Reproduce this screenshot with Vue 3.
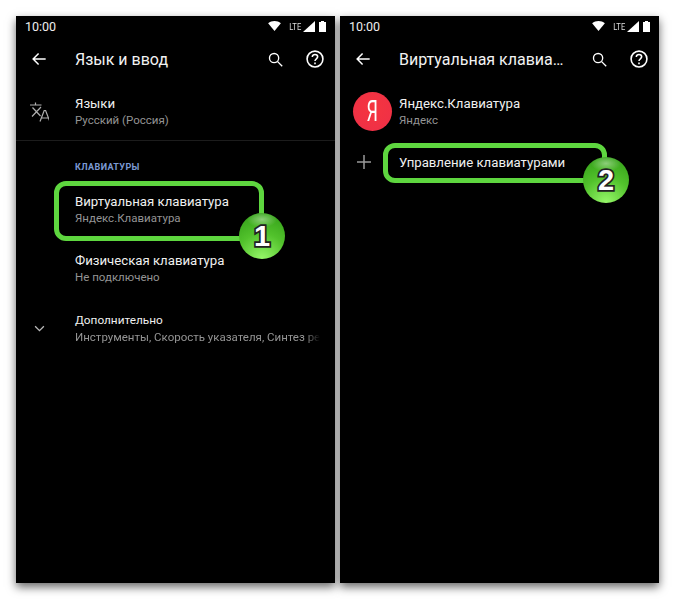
<template>
  <div class="page">
    <!-- левый экран -->
    <section class="phone">
      <div class="status">
        <span class="time">10:00</span>
        <span class="status-icons">
          <svg class="wifi" viewBox="0 0 14 11"><path d="M0 2.600C2 .9 4.400 0 7 0s5 .9 7 2.600L7 11z" /></svg>
          <span class="lte">LTE</span>
          <svg class="signal" viewBox="0 0 12 11"><path d="M12 0v11H0z" /></svg>
          <svg class="battery" viewBox="0 0 7 11"><path d="M2 0h3v1h2v10H0V1h2z" /></svg>
        </span>
      </div>
      <header class="toolbar">
        <svg class="back" viewBox="0 0 24 24"><path d="M20 12H5M11.500 5.500 5 12l6.500 6.500" /></svg>
        <h1 class="title">Язык и ввод</h1>
        <svg class="tool-icon search" viewBox="0 0 24 24"><circle cx="10" cy="10" r="6.500" /><path d="m15 15 6.500 6.500" /></svg>
        <svg class="tool-icon help" viewBox="0 0 24 24">
          <circle cx="12" cy="12" r="9.500" />
          <path d="M8.800 9.600c0-1.900 1.400-3.100 3.200-3.100s3.200 1.200 3.200 2.900c0 2.300-3.200 2.500-3.200 5.100" />
          <path d="M12 16.200v2" />
        </svg>
      </header>
      <div class="row row-lang">
        <span class="row-icon">
          <svg class="translate" viewBox="0 0 20 22">
            <path d="M1 5h11.500M6.500 2.500V5M3 16.500l9-9.500M3.500 7.500l8 8.500" />
            <path d="m11 21.500 4.200-11h1.400l4.200 11M12.500 18h6.800" />
          </svg>
        </span>
        <div class="row-text">
          <div class="row-title">Языки</div>
          <div class="row-sub">Русский (Россия)</div>
        </div>
      </div>
      <div class="divider"></div>
      <div class="group-label">КЛАВИАТУРЫ</div>
      <div class="row row-key">
        <span class="row-icon"></span>
        <div class="row-text">
          <div class="row-title">Виртуальная клавиатура</div>
          <div class="row-sub">Яндекс.Клавиатура</div>
        </div>
        <div class="mark mark-one"></div>
        <div class="badge badge-one">1</div>
      </div>
      <div class="row row-key">
        <span class="row-icon"></span>
        <div class="row-text">
          <div class="row-title">Физическая клавиатура</div>
          <div class="row-sub">Не подключено</div>
        </div>
      </div>
      <div class="row row-key">
        <span class="row-icon">
          <svg class="chevron" viewBox="0 0 12 8"><path d="m1 1.500 5 5 5-5" /></svg>
        </span>
        <div class="row-text">
          <div class="row-title small">Дополнительно</div>
          <div class="row-sub fade">Инструменты, Скорость указателя, Синтез ре</div>
        </div>
      </div>
    </section>

    <!-- правый экран -->
    <section class="phone">
      <div class="status">
        <span class="time">10:00</span>
        <span class="status-icons">
          <svg class="wifi" viewBox="0 0 14 11"><path d="M0 2.600C2 .9 4.400 0 7 0s5 .9 7 2.600L7 11z" /></svg>
          <span class="lte">LTE</span>
          <svg class="signal" viewBox="0 0 12 11"><path d="M12 0v11H0z" /></svg>
          <svg class="battery" viewBox="0 0 7 11"><path d="M2 0h3v1h2v10H0V1h2z" /></svg>
        </span>
      </div>
      <header class="toolbar">
        <svg class="back" viewBox="0 0 24 24"><path d="M20 12H5M11.500 5.500 5 12l6.500 6.500" /></svg>
        <h1 class="title">Виртуальная клавиа…</h1>
        <svg class="tool-icon search" viewBox="0 0 24 24"><circle cx="10" cy="10" r="6.500" /><path d="m15 15 6.500 6.500" /></svg>
        <svg class="tool-icon help" viewBox="0 0 24 24">
          <circle cx="12" cy="12" r="9.500" />
          <path d="M8.800 9.600c0-1.900 1.400-3.100 3.200-3.100s3.200 1.200 3.200 2.900c0 2.300-3.200 2.500-3.200 5.100" />
          <path d="M12 16.200v2" />
        </svg>
      </header>
      <div class="row row-lang">
        <span class="row-icon row-avatar">
          <span class="yandex"><span class="yandex-letter">Я</span></span>
        </span>
        <div class="row-text">
          <div class="row-title">Яндекс.Клавиатура</div>
          <div class="row-sub">Яндекс</div>
        </div>
      </div>
      <div class="row row-manage">
        <span class="row-icon">
          <svg class="plus" viewBox="0 0 14 14"><path d="M7 0v14M0 7h14" /></svg>
        </span>
        <div class="row-text">
          <div class="row-title">Управление клавиатурами</div>
        </div>
        <div class="mark mark-two"></div>
        <div class="badge badge-two">2</div>
      </div>
    </section>
  </div>
</template>

<script setup>
// статичный скриншот, данных нет
</script>

<style>
html,
body {
  margin: 0;
  background: #fff;
}
</style>

<style scoped>
.page {
  display: flex;
  gap: 5px;
  width: 675px;
  height: 599px;
  padding: 16px;
  box-sizing: border-box;
  font-family: Roboto, "Noto Sans", sans-serif;
  overflow: hidden;
}

.phone {
  width: 319px;
  height: 567px;
  background: #000;
  color: #fff;
  box-shadow: 0 4px 9px rgba(0, 0, 0, 0.6);
}

.status {
  display: flex;
  align-items: center;
  justify-content: space-between;
  height: 20px;
  padding: 0 9px;
}

.time {
  font-size: 12.500px;
  color: #eee;
}

.status-icons {
  display: flex;
  align-items: center;
}

.status-icons svg {
  display: block;
  fill: #fff;
}

.wifi {
  width: 13px;
  height: 10px;
  margin-right: 7px;
}

.lte {
  width: 13px;
  margin-right: 2px;
  font-size: 9.500px;
  text-align: center;
  color: #ddd;
  transform: scaleX(0.8);
}

.signal {
  width: 12px;
  height: 11px;
  margin-right: 4px;
}

.battery {
  width: 7px;
  height: 11px;
}

.toolbar {
  display: flex;
  align-items: center;
  height: 46px;
}

.back {
  width: 20px;
  height: 20px;
  margin-left: 13px;
  fill: none;
  stroke: #fff;
  stroke-width: 1.800;
  flex: none;
}

.title {
  margin: 0 0 0 26px;
  width: 169px;
  flex: none;
  font-size: 16px;
  font-weight: 400;
  color: #f2f2f2;
  white-space: nowrap;
}

.tool-icon {
  height: 20px;
  fill: none;
  stroke: #fff;
  stroke-width: 1.900;
  flex: none;
}

.search {
  width: 17px;
  height: 17px;
  margin-left: 23px;
}

.help {
  width: 20px;
  margin-left: 21px;
}

.row {
  position: relative;
  display: flex;
  align-items: center;
}

.row-lang {
  height: 58px;
}

.row-key {
  height: 59.500px;
}

.row-manage {
  height: 44px;
}

.row-icon {
  display: flex;
  align-items: center;
  justify-content: center;
  width: 47px;
  margin-right: 12px;
  flex: none;
}

.row-avatar {
  justify-content: flex-end;
  width: 52px;
  margin-right: 7px;
}

.row-text {
  min-width: 0;
  flex: 1;
  padding-right: 15px;
  padding-bottom: 1px;
}

.row-lang .row-text {
  padding-top: 1px;
  padding-bottom: 0;
}

.row-manage .row-text {
  padding-bottom: 0;
}

.row-title {
  margin-bottom: 1px;
  font-size: 13.200px;
  line-height: 17px;
  color: #f0f0f0;
}

.row-manage .row-title {
  margin-bottom: 0;
}

.row-title.small {
  font-size: 11.800px;
}

.row-sub {
  font-size: 11.500px;
  line-height: 15px;
  color: #949494;
  white-space: nowrap;
}

.fade {
  -webkit-mask-image: linear-gradient(to right, #000 94%, transparent);
  mask-image: linear-gradient(to right, #000 94%, transparent);
}

.translate {
  width: 20px;
  height: 22px;
  margin-left: -1px;
  fill: none;
  stroke: #b0b0b0;
  stroke-width: 1.200;
}

.chevron {
  width: 11px;
  height: 7px;
  fill: none;
  stroke: #bbb;
  stroke-width: 1.500;
}

.plus {
  width: 14px;
  height: 14px;
  fill: none;
  stroke: #999;
  stroke-width: 1.500;
}

.yandex {
  display: flex;
  align-items: center;
  justify-content: center;
  width: 39px;
  height: 39px;
  border-radius: 50%;
  background: radial-gradient(circle at 50% 40%, #f5353f, #ee2f48);
  color: #fff;
}

.yandex-letter {
  font-size: 29px;
  line-height: 1;
  transform: scaleX(0.62);
}

.divider {
  height: 1px;
  background: #1c1c1c;
}

.group-label {
  height: 39px;
  box-sizing: border-box;
  padding: 20px 0 0 59px;
  font-size: 9px;
  line-height: 12px;
  font-weight: 700;
  letter-spacing: 0.4px;
  color: #7c9ad4;
}

/* зелёные рамки и номера поверх строк */
.mark {
  position: absolute;
  box-sizing: border-box;
  border: 5px solid #5ed63f;
  border-radius: 12px;
}

.mark-one {
  left: 38px;
  top: 1px;
  width: 210px;
  height: 60px;
}

.mark-two {
  left: 43px;
  top: 3px;
  width: 224px;
  height: 40px;
}

.badge {
  position: absolute;
  display: flex;
  align-items: center;
  justify-content: center;
  width: 46px;
  height: 46px;
  border-radius: 50%;
  background:
    radial-gradient(ellipse 15px 8px at 50% 14%, rgba(255, 255, 255, 0.4), transparent),
    radial-gradient(circle at 50% 100%, #97f86a 0, #52c22c 50%, #2f9a16 100%);
  font-family: "Liberation Sans", Arial, sans-serif;
  font-size: 29px;
  font-weight: 700;
  color: #fff;
  -webkit-text-stroke: 3.500px #222;
  paint-order: stroke fill;
}

.badge-one {
  left: 223px;
  top: 33px;
}

.badge-two {
  left: 243px;
  top: 17px;
}
</style>
